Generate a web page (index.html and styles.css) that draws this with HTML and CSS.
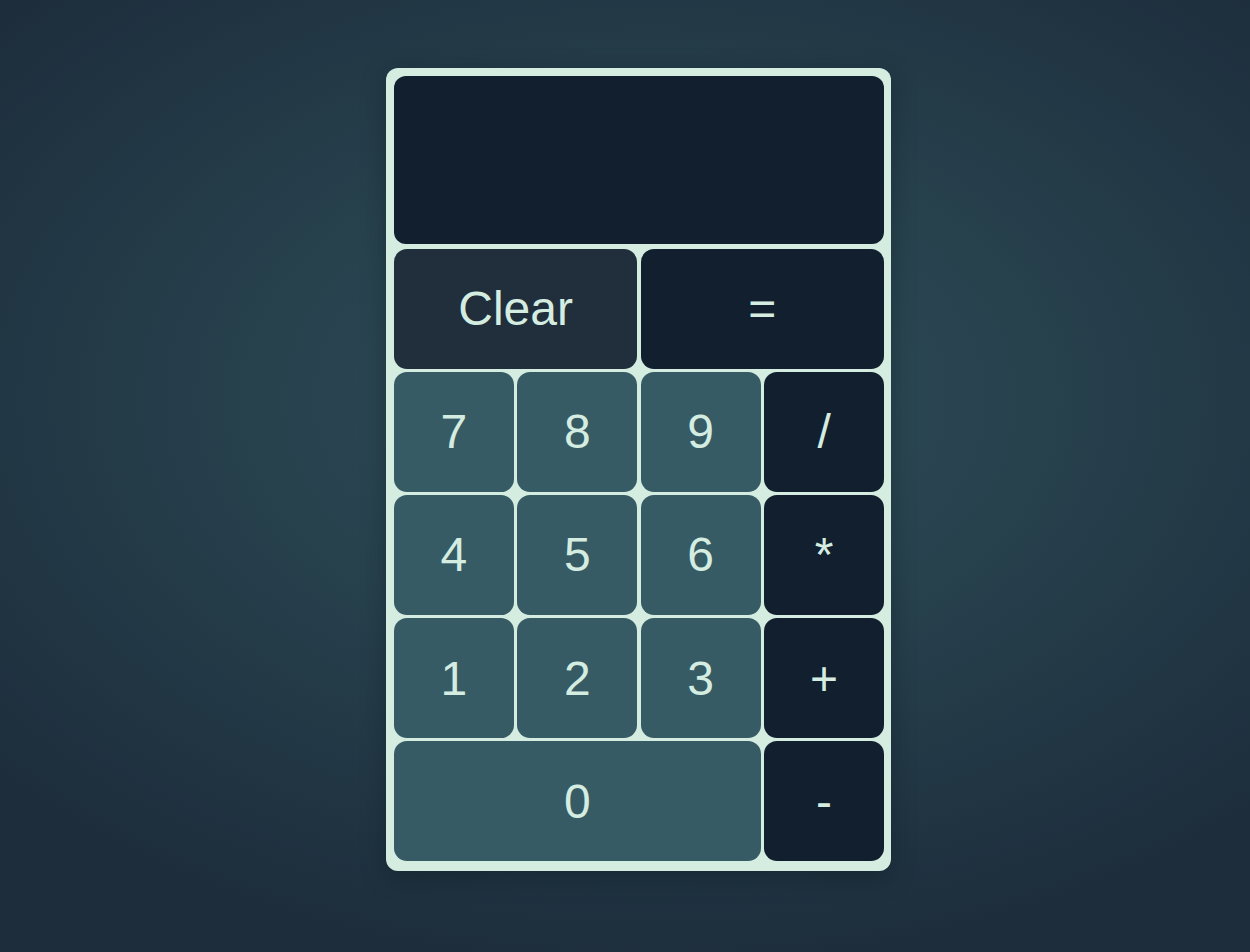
FILE: index.html
```html
<!DOCTYPE html>
<html lang="en">
<head>
<meta charset="utf-8">
<title>Calculator</title>
<link rel="stylesheet" href="styles.css">
</head>
<body>
<div class="calc">
  <div class="display"></div>
  <div class="keys">
    <button class="key key-clear wide">Clear</button>
    <button class="key key-op wide">=</button>
    <button class="key key-num">7</button>
    <button class="key key-num">8</button>
    <button class="key key-num">9</button>
    <button class="key key-op">/</button>
    <button class="key key-num">4</button>
    <button class="key key-num">5</button>
    <button class="key key-num">6</button>
    <button class="key key-op">*</button>
    <button class="key key-num">1</button>
    <button class="key key-num">2</button>
    <button class="key key-num">3</button>
    <button class="key key-op">+</button>
    <button class="key key-num zero">0</button>
    <button class="key key-op">-</button>
  </div>
</div>
</body>
</html>
```
FILE: styles.css
```css
html, body {
  margin: 0;
  height: 100%;
}
body {
  background: radial-gradient(ellipse 70% 60% at 52% 42%, #2f4f59 0%, #27414d 45%, #1d2d3c 100%);
  font-family: "Liberation Sans", Arial, sans-serif;
  display: flex;
  justify-content: center;
  align-items: flex-start;
  padding: 68px 0 0 27px;
  box-sizing: border-box;
}
.calc {
  width: 505px;
  box-sizing: border-box;
  padding: 8px 7px 10px 8px;
  background: #d4ede0;
  border-radius: 12px;
  box-shadow: 0 6px 24px rgba(10, 20, 30, 0.35);
  display: flex;
  flex-direction: column;
  gap: 5px;
}
.display {
  height: 168px;
  background: #111f2f;
  border-radius: 12px;
}
.keys {
  display: grid;
  grid-template-columns: repeat(4, 1fr);
  grid-auto-rows: 119.5px;
  gap: 3.6px 3.5px;
}
.key {
  border: none;
  border-radius: 13px;
  color: #d4ede0;
  font-family: "Liberation Sans", Arial, sans-serif;
  font-size: 48px;
  padding: 0;
  display: flex;
  align-items: center;
  justify-content: center;
}
.wide {
  grid-column: span 2;
}
.zero {
  grid-column: span 3;
}
.key-num {
  background: #365b65;
}
.key-op {
  background: #111f2f;
}
.key-clear {
  background: #212e3c;
}
```
